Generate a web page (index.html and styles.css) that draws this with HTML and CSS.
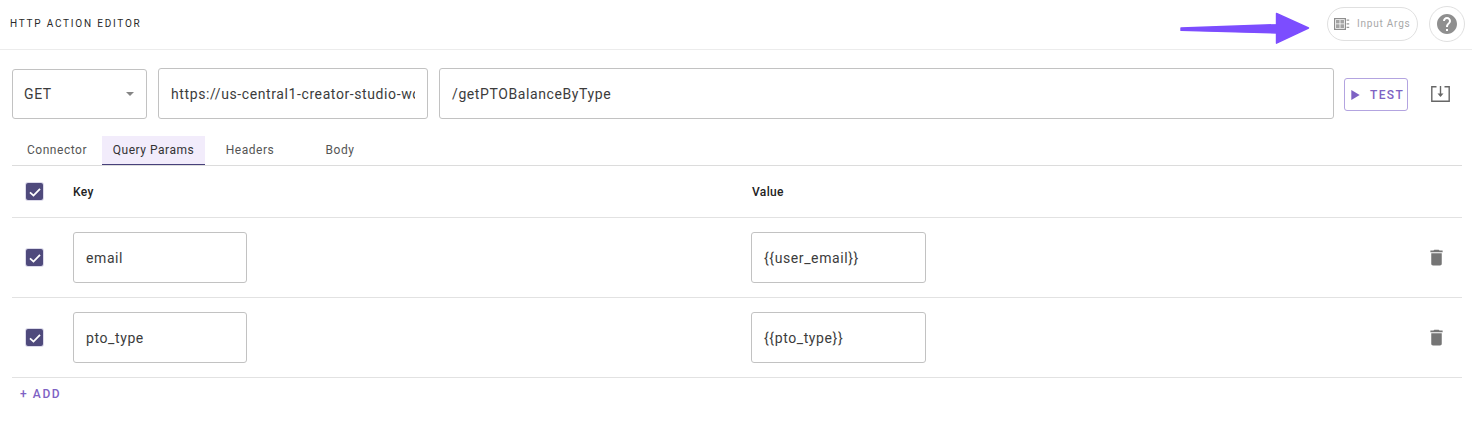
FILE: index.html
```html
<!DOCTYPE html>
<html lang="en">
<head>
<meta charset="utf-8">
<title>HTTP Action Editor</title>
<link rel="stylesheet" href="styles.css">
</head>
<body>
<header class="topbar">
  <h1 class="title">HTTP Action Editor</h1>
  <div class="top-actions">
    <button class="pill">
      <svg class="pill-icon" viewBox="0 0 16 14" width="16" height="14"><path fill="#8f8f8f" fill-rule="evenodd" d="M0 1h12v12H0zM1.2 2.2v9.6h9.6V2.2z"/><path fill="#a3a3a3" d="M2 3h3.6v3.4H2zM6.4 3H10v3.4H6.4zM2 7.2h3.6V11H2zM6.4 7.2H10V11H6.4z"/><path fill="#9a9a9a" d="M12.6 2.6h2.6v1.2h-2.6zM12.6 6.2h2.6v1.2h-2.6zM12.6 9.8h2.6V11h-2.6z"/></svg>
      <span>Input Args</span>
    </button>
    <button class="help" aria-label="Help">
      <svg viewBox="0 0 24 24" width="24" height="24"><path fill="#8f8f8f" d="M12 2C6.48 2 2 6.48 2 12s4.48 10 10 10 10-4.48 10-10S17.52 2 12 2zm1 17h-2v-2h2v2zm2.07-7.75l-.9.92C13.45 12.9 13 13.5 13 15h-2v-.5c0-1.1.45-2.1 1.17-2.83l1.24-1.26c.37-.36.59-.86.59-1.41 0-1.1-.9-2-2-2s-2 .9-2 2H8c0-2.21 1.79-4 4-4s4 1.79 4 4c0 .88-.36 1.68-.93 2.25z"/></svg>
    </button>
  </div>
  <svg class="arrow" viewBox="0 0 134 36" width="134" height="36"><path fill="#7c4dff" stroke="#7c4dff" stroke-width="1.4" stroke-linejoin="round" d="M2 17 97.5 13.6 97.5 2.4 129.5 17 97.5 32.2 97.5 22 2 19.4z"/></svg>
</header>

<main class="content">
  <section class="request">
    <div class="field select"><span>GET</span><i class="caret"></i></div>
    <div class="field url"><span class="clip">https://us-central1-creator-studio-wor</span></div>
    <div class="field path"><span>/getPTOBalanceByType</span></div>
    <button class="test">
      <svg viewBox="0 0 10 12" width="9" height="10"><path fill="#7e62c4" d="M0 0 10 6 0 12z"/></svg>
      <span>Test</span>
    </button>
    <button class="save" aria-label="Import">
      <svg viewBox="0 0 19 16" width="19" height="16"><path fill="none" stroke="#666" stroke-width="1.4" d="M5.5 .8H.8v14.4h17.4V.8h-4.7"/><path fill="none" stroke="#666" stroke-width="1.4" d="M9.5 0v8"/><path fill="#666" d="M6.5 7.4h6L9.5 11z"/></svg>
    </button>
  </section>

  <nav class="tabs">
    <a class="tab">Connector</a>
    <a class="tab active">Query Params</a>
    <a class="tab">Headers</a>
    <a class="tab">Body</a>
  </nav>

  <section class="table">
    <div class="row head">
      <span class="check"><svg viewBox="0 0 16 16" width="16" height="16"><path fill="none" stroke="#fff" stroke-width="1.8" d="M3 8.3 6.5 11.6 13 4.8"/></svg></span>
      <span class="th">Key</span>
      <span class="th th-value">Value</span>
      <span></span>
    </div>
    <div class="row">
      <span class="check"><svg viewBox="0 0 16 16" width="16" height="16"><path fill="none" stroke="#fff" stroke-width="1.8" d="M3 8.3 6.5 11.6 13 4.8"/></svg></span>
      <div class="field cell"><span>email</span></div>
      <div class="field cell value"><span>{{user_email}}</span></div>
      <svg class="trash" viewBox="0 0 24 24" width="21" height="21"><path fill="#757575" d="M6 19c0 1.1.9 2 2 2h8c1.1 0 2-.9 2-2V7H6v12zM19 4h-3.5l-1-1h-5l-1 1H5v2h14V4z"/></svg>
    </div>
    <div class="row">
      <span class="check"><svg viewBox="0 0 16 16" width="16" height="16"><path fill="none" stroke="#fff" stroke-width="1.8" d="M3 8.3 6.5 11.6 13 4.8"/></svg></span>
      <div class="field cell"><span>pto_type</span></div>
      <div class="field cell value"><span>{{pto_type}}</span></div>
      <svg class="trash" viewBox="0 0 24 24" width="21" height="21"><path fill="#757575" d="M6 19c0 1.1.9 2 2 2h8c1.1 0 2-.9 2-2V7H6v12zM19 4h-3.5l-1-1h-5l-1 1H5v2h14V4z"/></svg>
    </div>
  </section>
  <button class="add">+ Add</button>
</main>
</body>
</html>
```
FILE: styles.css
```css
* { box-sizing: border-box; }
html, body { margin: 0; background: #fff; }
body { font-family: Roboto, "Liberation Sans", sans-serif; color: #333; height: 428px; overflow: hidden; }
button { font-family: inherit; background: none; border: 0; padding: 0; cursor: pointer; }

.topbar { position: relative; height: 50px; border-bottom: 1px solid #ececec; display: flex; align-items: center; justify-content: space-between; padding: 0 7px 2px 10px; }
.title { margin: 0; font-size: 10px; font-weight: 400; letter-spacing: 1.78px; text-transform: uppercase; color: #2a2a2a; }
.top-actions { display: flex; align-items: center; gap: 11px; }
.pill { width: 91px; height: 34px; border: 1px solid #e0e0e0; border-radius: 17px; display: flex; align-items: center; gap: 7px; padding-left: 6px; color: #a8a8a8; font-size: 10px; letter-spacing: 0.78px; }
.help { width: 36px; height: 36px; border: 1px solid #e0e0e0; border-radius: 50%; display: flex; align-items: center; justify-content: center; }
.arrow { position: absolute; left: 1179px; top: 11px; }

.content { padding: 18px 10px 0 12px; }
.request { display: flex; align-items: flex-start; height: 51px; }
.field { border: 1px solid #c2c2c2; border-radius: 3px; display: flex; align-items: center; padding: 0 12px; font-size: 14px; letter-spacing: 0.6px; color: #3c3c3c; height: 51px; background: #fff; }
.select { width: 135px; height: 50px; margin-top: 1px; justify-content: space-between; padding: 0 12px 0 11px; }
.caret { width: 0; height: 0; border-left: 4.5px solid transparent; border-right: 4.5px solid transparent; border-top: 4.5px solid #858585; }
.url { width: 270px; margin-left: 11px; }
.clip { display: block; overflow: hidden; white-space: nowrap; width: 100%; }
.path { width: 895px; margin-left: 11px; }
.test { width: 64px; height: 33px; margin: 10px 0 0 10px; border: 1px solid #b3a4e0; border-radius: 3px; display: flex; align-items: center; gap: 10px; padding-left: 6px; color: #7e62c4; font-size: 12px; font-weight: 500; letter-spacing: 1.35px; text-transform: uppercase; }
.save { margin: 18px 0 0 23px; width: 19px; height: 16px; display: block; }
.save svg { display: block; }

.tabs { display: flex; height: 30px; margin-top: 17px; border-bottom: 1px solid #dcdcdc; width: 1450px; }
.tab { width: 90px; text-align: center; font-size: 12px; letter-spacing: 0.52px; line-height: 28px; color: #555; height: 29px; }
.tab.active { width: 103px; background: #f2ecfb; color: #333; border-bottom: 1px solid #47417a; }

.table { width: 1450px; }
.row { display: grid; grid-template-columns: 61px 678px 1fr 24px; align-items: center; height: 80px; padding-right: 14px; border-bottom: 1px solid #e2e2e2; }
.row.head { height: 52px; }
.check { width: 17px; height: 17px; margin-left: 14px; background: #4f4a7c; border-radius: 2px; box-shadow: 0 0 0 1px #dcdaea; display: flex; align-items: center; justify-content: center; }
.th { font-size: 12px; font-weight: 500; color: #222; letter-spacing: 0.35px; }
.th-value { padding-left: 1px; }
.cell { width: 174px; }
.value { width: 175px; }
.trash { display: block; justify-self: center; }

.add { display: block; margin: 9px 0 0 8px; color: #7e62c4; font-size: 12px; font-weight: 500; letter-spacing: 1.6px; text-transform: uppercase; }
```
